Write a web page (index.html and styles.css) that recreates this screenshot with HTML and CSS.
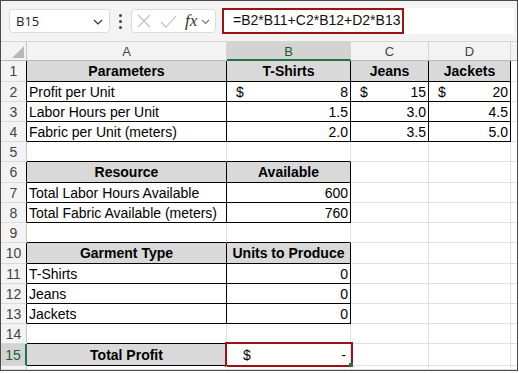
FILE: index.html
```html
<!DOCTYPE html>
<html>
<head>
<meta charset="utf-8">
<link rel="stylesheet" href="styles.css">
</head>
<body>
<div class="frame">
  <div class="toolbar">
    <div class="namebox">
      <span class="nb-text">B15</span>
      <svg class="chev" width="10" height="6" viewBox="0 0 10 6"><polyline points="1,1 5,5 9,1" fill="none" stroke="#333" stroke-width="1.2"/></svg>
    </div>
    <div class="dots"><i></i><i></i><i></i></div>
    <div class="fxbox">
      <svg class="ico-x" width="14" height="14" viewBox="0 0 14 14"><path d="M1 1L13 13M13 1L1 13" stroke="#bdbdbd" stroke-width="1.1" fill="none"/></svg>
      <svg class="ico-check" width="17" height="13" viewBox="0 0 17 13"><polyline points="1,7 6,12 16,1" fill="none" stroke="#bdbdbd" stroke-width="1.1"/></svg>
      <span class="fx">fx</span>
      <svg class="chev-sm" width="9" height="6" viewBox="0 0 9 6"><polyline points="1,1 4.5,4.5 8,1" fill="none" stroke="#777" stroke-width="1.1"/></svg>
    </div>
    <div class="formula">
      <span class="formula-text">=B2*B11+C2*B12+D2*B13</span>
    </div>
  </div>

  <div class="sheet">
    <!-- column headers -->
    <div class="corner"><span class="tri"></span></div>
    <div class="ch">A</div>
    <div class="ch sel">B</div>
    <div class="ch">C</div>
    <div class="ch">D</div>
    <div class="ch last"></div>

    <!-- row 1 -->
    <div class="rh rhb">1</div>
    <div class="c hd br bb">Parameters</div>
    <div class="c hd br bb">T-Shirts</div>
    <div class="c hd br bb">Jeans</div>
    <div class="c hd br bb">Jackets</div>
    <div class="c last"></div>

    <!-- row 2 -->
    <div class="rh rhb">2</div>
    <div class="c br bb">Profit per Unit</div>
    <div class="c acc br bb"><span>$</span><span>8</span></div>
    <div class="c acc br bb"><span>$</span><span>15</span></div>
    <div class="c acc br bb"><span>$</span><span>20</span></div>
    <div class="c last"></div>

    <!-- row 3 -->
    <div class="rh rhb">3</div>
    <div class="c br bb">Labor Hours per Unit</div>
    <div class="c num br bb">1.5</div>
    <div class="c num br bb">3.0</div>
    <div class="c num br bb">4.5</div>
    <div class="c last"></div>

    <!-- row 4 -->
    <div class="rh rhb">4</div>
    <div class="c br bb">Fabric per Unit (meters)</div>
    <div class="c num br bb">2.0</div>
    <div class="c num br bb">3.5</div>
    <div class="c num br bb">5.0</div>
    <div class="c last"></div>

    <!-- row 5 -->
    <div class="rh">5</div>
    <div class="c bb"></div>
    <div class="c bb"></div>
    <div class="c"></div>
    <div class="c"></div>
    <div class="c last"></div>

    <!-- row 6 -->
    <div class="rh rhb">6</div>
    <div class="c hd br bb">Resource</div>
    <div class="c hd br bb">Available</div>
    <div class="c"></div>
    <div class="c"></div>
    <div class="c last"></div>

    <!-- row 7 -->
    <div class="rh rhb">7</div>
    <div class="c br bb">Total Labor Hours Available</div>
    <div class="c num br bb">600</div>
    <div class="c"></div>
    <div class="c"></div>
    <div class="c last"></div>

    <!-- row 8 -->
    <div class="rh rhb">8</div>
    <div class="c br bb">Total Fabric Available (meters)</div>
    <div class="c num br bb">760</div>
    <div class="c"></div>
    <div class="c"></div>
    <div class="c last"></div>

    <!-- row 9 -->
    <div class="rh">9</div>
    <div class="c bb"></div>
    <div class="c bb"></div>
    <div class="c"></div>
    <div class="c"></div>
    <div class="c last"></div>

    <!-- row 10 -->
    <div class="rh rhb">10</div>
    <div class="c hd br bb">Garment Type</div>
    <div class="c hd br bb">Units to Produce</div>
    <div class="c"></div>
    <div class="c"></div>
    <div class="c last"></div>

    <!-- row 11 -->
    <div class="rh rhb">11</div>
    <div class="c br bb">T-Shirts</div>
    <div class="c num br bb">0</div>
    <div class="c"></div>
    <div class="c"></div>
    <div class="c last"></div>

    <!-- row 12 -->
    <div class="rh rhb">12</div>
    <div class="c br bb">Jeans</div>
    <div class="c num br bb">0</div>
    <div class="c"></div>
    <div class="c"></div>
    <div class="c last"></div>

    <!-- row 13 -->
    <div class="rh rhb">13</div>
    <div class="c br bb">Jackets</div>
    <div class="c num br bb">0</div>
    <div class="c"></div>
    <div class="c"></div>
    <div class="c last"></div>

    <!-- row 14 -->
    <div class="rh">14</div>
    <div class="c bb"></div>
    <div class="c"></div>
    <div class="c"></div>
    <div class="c"></div>
    <div class="c last"></div>

    <!-- row 15 -->
    <div class="rh rhsel">15</div>
    <div class="c hd br bb">Total Profit</div>
    <div class="c acc active"><span class="dollar2">$</span><span class="dash">-</span></div>
    <div class="c"></div>
    <div class="c"></div>
    <div class="c last"></div>

    <!-- row 16 (partial) -->
    <div class="rh"></div>
    <div class="c"></div>
    <div class="c"></div>
    <div class="c"></div>
    <div class="c"></div>
    <div class="c last"></div>
  </div>
</div>
</body>
</html>
```

FILE: styles.css
```css
* { box-sizing: border-box; }

html, body {
  margin: 0;
  padding: 0;
  background: #ffffff;
}

body {
  font-family: "Liberation Sans", Arial, sans-serif;
  color: #000;
}

.frame {
  width: 518px;
  height: 371px;
  border: 1px solid #4a4a4a;
  background: #f3f3f3;
  overflow: hidden;
}

/* ---------- toolbar ---------- */
.toolbar {
  height: 41px;
  display: flex;
  align-items: flex-start;
  padding: 8px 0 0 8px;
  border-bottom: 1px solid #d6d6d6;
  background: #f3f3f3;
}

.namebox {
  width: 101px;
  height: 24px;
  background: #fff;
  border: 1px solid #dcdcdc;
  border-radius: 4px;
  display: flex;
  align-items: center;
  justify-content: space-between;
  padding: 0 6px 0 6px;
}

.nb-text {
  font-family: "Open Sans", "Liberation Sans", sans-serif;
  font-size: 13px;
  color: #222;
}

.chev { display: block; margin-top: 1px; }

.dots {
  width: 3px;
  height: 24px;
  margin: 0 9px 0 9px;
  display: flex;
  flex-direction: column;
  align-items: center;
  justify-content: center;
  gap: 3px;
}

.dots i {
  display: block;
  width: 3px;
  height: 3px;
  border-radius: 50%;
  background: #444;
}

.fxbox {
  width: 85px;
  height: 24px;
  background: #fff;
  border: 1px solid #dcdcdc;
  border-radius: 4px;
  display: flex;
  align-items: center;
  padding-left: 5px;
}

.ico-x { display: block; margin-right: 9px; }
.ico-check { display: block; margin-right: 8px; }

.fx {
  font-family: "Liberation Serif", "DejaVu Serif", serif;
  font-style: italic;
  font-size: 17px;
  color: #333;
  line-height: 1;
  margin-right: 4px;
  margin-top: -2px;
}

.chev-sm { display: block; margin-top: 2px; }

.formula {
  flex: 1;
  height: 26px;
  margin: -1px 3px 0 6px;
  background: #fff;
  display: flex;
}

.formula-text {
  width: 182px;
  height: 26px;
  border: 2px solid #9b1313;
  padding-left: 9px;
  font-size: 14px;
  line-height: 21px;
  color: #111;
  white-space: nowrap;
}

/* ---------- sheet grid ---------- */
.sheet {
  display: grid;
  grid-template-columns: 26px 200px 124px 78px 82px 6px;
  grid-template-rows: 19px 21px 20px 20px 20px 20px 21px 20px 20px 20px 21px 20px 20px 20px 20px 22px 4px;
  background: #fff;
}

.corner {
  position: relative;
  background: #f3f3f3;
  border-right: 1px solid #c6c6c6;
  border-bottom: 1px solid #b9b9b9;
}

.tri {
  position: absolute;
  right: 2px;
  bottom: 2px;
  width: 0;
  height: 0;
  border-left: 12px solid transparent;
  border-bottom: 12px solid #b8b8b8;
}

.ch {
  background: #f3f3f3;
  border-right: 1px solid #d4d4d4;
  border-bottom: 1px solid #b9b9b9;
  font-size: 13px;
  color: #444;
  display: flex;
  align-items: center;
  justify-content: center;
  padding-top: 1px;
}

.ch.sel {
  background: #d3d3d3;
  border-bottom: 2px solid #217346;
  color: #185c34;
}

.ch.last { border-right: none; }

.rh {
  background: #f3f3f3;
  border-right: 1px solid #c6c6c6;
  border-bottom: 1px solid #dadada;
  font-size: 14px;
  color: #444;
  display: flex;
  align-items: center;
  justify-content: center;
}

.rh.rhb { border-right-color: #000; }

.rh.rhsel {
  background: #d3d3d3;
  border-right: 2px solid #217346;
  color: #185c34;
}

.c {
  position: relative;
  border-right: 1px solid #e1e1e1;
  border-bottom: 1px solid #e1e1e1;
  font-size: 14px;
  display: flex;
  align-items: center;
  padding: 0 2px 0 2px;
  white-space: nowrap;
}

.c.last { border-right: none; }

.c.br { border-right-color: #000; }
.c.bb { border-bottom-color: #000; }

.c.hd {
  background: #d9d9d9;
  font-weight: bold;
  justify-content: center;
}

.c.num { justify-content: flex-end; }

.c.acc {
  justify-content: space-between;
  padding-left: 9px;
}

.c.active {
  padding-left: 16px;
  padding-right: 4px;
}

.c.active::after {
  content: "";
  position: absolute;
  left: -2px;
  right: -3px;
  top: -2px;
  bottom: -2px;
  border: 2px solid #9b1313;
}

.c.active::before {
  content: "";
  position: absolute;
  right: -3px;
  bottom: -2px;
  width: 4px;
  height: 4px;
  background: #217346;
  z-index: 2;
}
```
